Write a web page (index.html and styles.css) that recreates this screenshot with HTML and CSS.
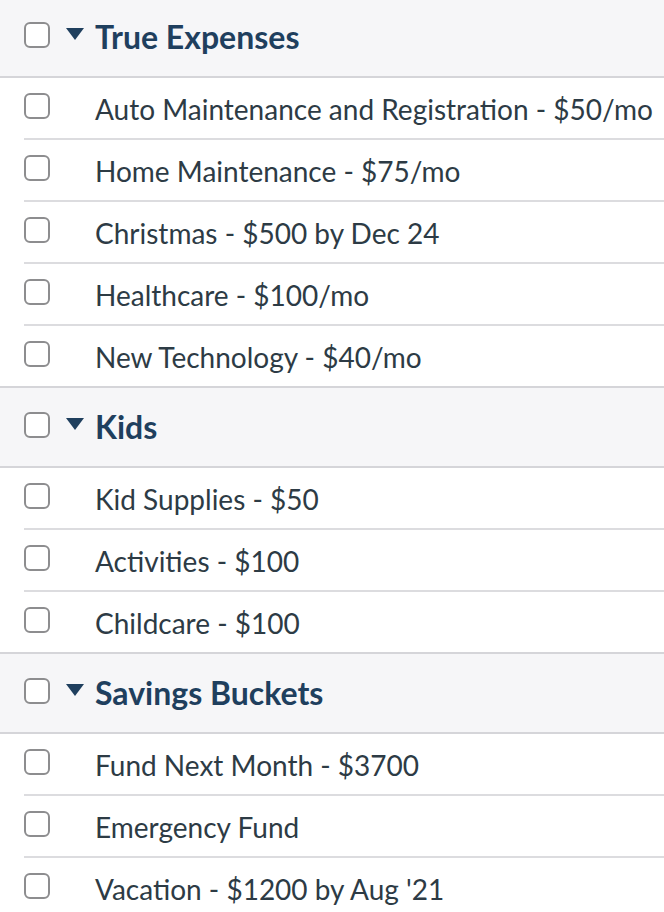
FILE: index.html
```html
<!DOCTYPE html>
<html>
<head>
<meta charset="utf-8">
<link rel="stylesheet" href="styles.css">
</head>
<body>
<div class="list">
  <div class="group">
    <div class="group-header">
      <span class="box"></span>
      <span class="caret"></span>
      <span class="group-title">True Expenses</span>
    </div>
    <div class="item"><span class="box"></span><span class="label">Auto Maintenance and Registration - $50/mo</span></div>
    <div class="item"><span class="box"></span><span class="label">Home Maintenance - $75/mo</span></div>
    <div class="item"><span class="box"></span><span class="label">Christmas - $500 by Dec 24</span></div>
    <div class="item"><span class="box"></span><span class="label">Healthcare - $100/mo</span></div>
    <div class="item"><span class="box"></span><span class="label">New Technology - $40/mo</span></div>
  </div>
  <div class="group">
    <div class="group-header">
      <span class="box"></span>
      <span class="caret"></span>
      <span class="group-title">Kids</span>
    </div>
    <div class="item"><span class="box"></span><span class="label">Kid Supplies - $50</span></div>
    <div class="item"><span class="box"></span><span class="label">Activities - $100</span></div>
    <div class="item"><span class="box"></span><span class="label">Childcare - $100</span></div>
  </div>
  <div class="group">
    <div class="group-header">
      <span class="box"></span>
      <span class="caret"></span>
      <span class="group-title">Savings Buckets</span>
    </div>
    <div class="item"><span class="box"></span><span class="label">Fund Next Month - $3700</span></div>
    <div class="item"><span class="box"></span><span class="label">Emergency Fund</span></div>
    <div class="item"><span class="box"></span><span class="label">Vacation - $1200 by Aug '21</span></div>
  </div>
</div>
</body>
</html>
```
FILE: styles.css
```css
html, body {
  margin: 0;
  padding: 0;
  background: #ffffff;
  overflow: hidden;
}
body {
  font-family: Lato, "Open Sans", sans-serif;
  color: #2d3b45;
}
.list {
  margin-top: -4px;
}
.group-header {
  height: 78px;
  display: flex;
  align-items: center;
  padding-left: 24px;
  background: #f6f6f8;
  border-top: 2px solid #d5d5d9;
  border-bottom: 2px solid #d5d5d9;
  box-sizing: content-box;
}
.group:first-child .group-header {
  border-top-color: #f6f6f8;
}
.box {
  width: 22px;
  height: 22px;
  border: 2px solid #8d8d8f;
  border-radius: 6px;
  flex: none;
  background: #fff;
}
.group-header .box {
  margin-top: -4px;
}
.caret {
  width: 0;
  height: 0;
  border-left: 9px solid transparent;
  border-right: 9px solid transparent;
  border-top: 12px solid #1f3f5e;
  margin-left: 16px;
  margin-top: -6px;
  flex: none;
}
.group-title {
  margin-left: 11px;
  font-size: 32px;
  font-weight: 700;
  color: #1f3f5e;
  line-height: 1;
  margin-top: 0;
}
.item {
  margin-left: 24px;
  height: 60px;
  display: flex;
  align-items: center;
  border-bottom: 2px solid #dcdcdf;
}
.group .item:last-child {
  border-bottom: none;
  height: 60px;
}
.item .box {
  margin-top: -4px;
}
.label {
  margin-left: 45px;
  font-size: 28px;
  line-height: 1;
  color: #2d3b45;
  white-space: nowrap;
  margin-top: 2px;
}
```
